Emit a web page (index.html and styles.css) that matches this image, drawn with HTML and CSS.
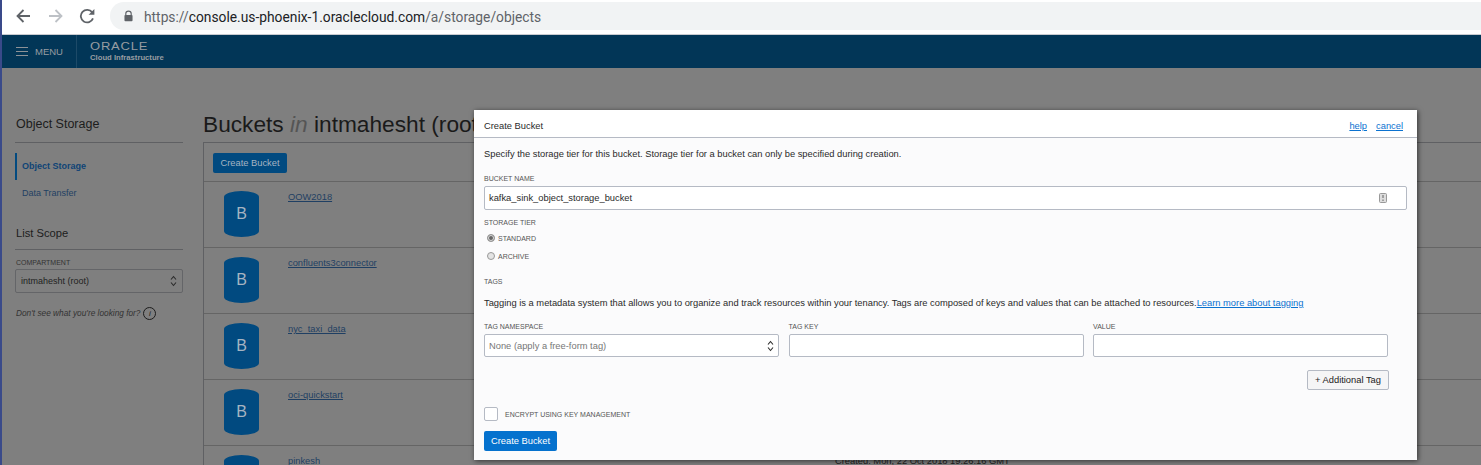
FILE: index.html
```html
<!DOCTYPE html>
<html lang="en">

<head>
    <meta charset="UTF-8">
    <meta name="viewport" content="width=device-width, initial-scale=1.0">
    <title>Object Storage</title>
    <link rel="stylesheet" href="styles.css">
</head>

<body>

    <!-- Browser toolbar -->
    <div class="toolbar">
        <svg class="tool-icon" viewBox="0 0 16 16"><path d="M15 8H3M8.500 2 2.500 8l6 6" fill="none" stroke="#5f6368" stroke-width="1.800"/></svg>
        <svg class="tool-icon" viewBox="0 0 16 16"><path d="M2 8h12M8.500 2l6 6-6 6" fill="none" stroke="#bdc1c6" stroke-width="1.800"/></svg>
        <svg class="tool-icon" viewBox="0 0 16 16"><path d="M14 10.400A6.300 6.300 0 1 1 13.200 4.400" fill="none" stroke="#5f6368" stroke-width="1.800"/><path d="M15.400 1v5.800H9.600z" fill="#5f6368"/></svg>
        <div class="address">
            <svg class="lock" viewBox="0 0 10 12"><path d="M2 5V3.500a3 3 0 0 1 6 0V5" fill="none" stroke="#5f6368" stroke-width="1.300"/><rect x="0.500" y="4.800" width="9" height="7" rx="1" fill="#5f6368"/></svg>
            <span class="url-dim">https://</span><span class="url-host">console.us-phoenix-1.oraclecloud.com</span><span class="url-dim">/a/storage/objects</span>
        </div>
    </div>

    <div class="window">
        <header class="topnav">
            <div class="menu">
                <svg class="burger" viewBox="0 0 12 9"><path d="M0 .5h12M0 4.500h12M0 8.500h12" stroke="#8d9297" stroke-width="1"/></svg>
                <span>MENU</span>
            </div>
            <div class="brand">
                <span class="brand-name">ORACLE</span>
                <span class="brand-sub">Cloud Infrastructure</span>
            </div>
        </header>

        <div class="page">
            <aside class="sidebar">
                <h3 class="side-title">Object Storage</h3>
                <ul class="side-links">
                    <li class="active">Object Storage</li>
                    <li>Data Transfer</li>
                </ul>
                <h3 class="side-title scope-title">List Scope</h3>
                <label class="side-label">COMPARTMENT</label>
                <div class="side-select">
                    <span>intmahesht (root)</span>
                    <svg class="updown" viewBox="0 0 7 12"><path d="M1 4.500 3.500 1.500 6 4.500M1 7.500l2.500 3 2.500-3" fill="none" stroke="#2b2b2b" stroke-width="1.100"/></svg>
                </div>
                <p class="side-help">Don't see what you're looking for? <span class="info">i</span></p>
            </aside>

            <main class="content">
                <h1 class="title">Buckets <em>in</em> intmahesht (root)</h1>
                <div class="panel">
                    <div class="panel-top"><button class="dim-btn">Create Bucket</button></div>
                    <div class="bucket">
                        <div class="can">B</div>
                        <a href="#">OOW2018</a>
                    </div>
                    <div class="bucket">
                        <div class="can">B</div>
                        <a href="#">confluents3connector</a>
                    </div>
                    <div class="bucket">
                        <div class="can">B</div>
                        <a href="#">nyc_taxi_data</a>
                    </div>
                    <div class="bucket">
                        <div class="can">B</div>
                        <a href="#">oci-quickstart</a>
                    </div>
                    <div class="bucket">
                        <div class="can">B</div>
                        <a href="#" class="plain">pinkesh</a>
                        <span class="created">Created: Mon, 22 Oct 2018 19:26:16 GMT</span>
                    </div>
                </div>
            </main>
        </div>

        <!-- Create Bucket dialog -->
        <div class="modal">
            <div class="modal-head">
                <span>Create Bucket</span>
                <div class="modal-links"><a href="#">help</a><a href="#">cancel</a></div>
            </div>
            <div class="modal-body">
                <p class="intro">Specify the storage tier for this bucket. Storage tier for a bucket can only be specified during creation.</p>
                <label class="field-label name-label">BUCKET NAME</label>
                <div class="input name-input">
                    <span>kafka_sink_object_storage_bucket</span>
                    <svg class="key-icon" viewBox="0 0 8 10"><rect x=".5" y=".5" width="7" height="9" rx="1" fill="#ddd" stroke="#999"/><path d="M4 2v3M4 6.500v1.500" stroke="#777" stroke-width="1.200"/></svg>
                </div>
                <label class="field-label tier-label">STORAGE TIER</label>
                <div class="radio-row"><span class="radio checked"></span><span class="radio-text">STANDARD</span></div>
                <div class="radio-row"><span class="radio"></span><span class="radio-text">ARCHIVE</span></div>
                <label class="field-label tags-label">TAGS</label>
                <p class="tag-text">Tagging is a metadata system that allows you to organize and track resources within your tenancy. Tags are composed of keys and values that can be attached to resources.<a href="#">Learn more about tagging</a></p>
                <div class="tag-grid">
                    <div>
                        <label class="field-label">TAG NAMESPACE</label>
                        <div class="input tag-input">
                            <span class="placeholder">None (apply a free-form tag)</span>
                            <svg class="updown" viewBox="0 0 7 12"><path d="M1 4.500 3.500 1.500 6 4.500M1 7.500l2.500 3 2.500-3" fill="none" stroke="#2b2b2b" stroke-width="1.100"/></svg>
                        </div>
                    </div>
                    <div>
                        <label class="field-label">TAG KEY</label>
                        <div class="input tag-input"></div>
                    </div>
                    <div>
                        <label class="field-label">VALUE</label>
                        <div class="input tag-input"></div>
                    </div>
                </div>
                <div class="add-row"><button class="add-btn">+ Additional Tag</button></div>
                <div class="check-row"><span class="check"></span><span class="check-text">ENCRYPT USING KEY MANAGEMENT</span></div>
                <button class="primary-btn">Create Bucket</button>
            </div>
        </div>
    </div>

</body>

</html>
```

FILE: styles.css
```css
* {
    box-sizing: border-box;
}

html,
body {
    height: 100%;
}

body {
    font-family: "Liberation Sans", Arial, sans-serif;
    margin: 0;
    padding: 0;
    overflow: hidden;
    background-color: #7f7f7f;
    border-left: 2px solid #3a4a8a;
}

.toolbar {
    height: 34px;
    background-color: #fff;
    display: flex;
    align-items: center;
    padding: 0 0 2px 13px;
}

.tool-icon {
    width: 16px;
    height: 16px;
    margin-right: 16px;
    flex: none;
}

.address {
    width: 1371px;
    height: 28px;
    margin-left: -1px;
    padding: 2px 0 0 14px;
    background-color: #f1f3f4;
    border-radius: 14px 0 0 14px;
    display: flex;
    align-items: center;
    font-family: "Roboto", "Liberation Sans", sans-serif;
    font-size: 13.8px;
}

.lock {
    width: 9px;
    height: 12px;
    margin: -3px 11px 0 0;
}

.url-dim {
    color: #5f6368;
}

.url-host {
    color: #202124;
}

.window {
    position: relative;
    height: 431px;
    border-top: 1px solid #c9cbd0;
    overflow: hidden;
}

.topnav {
    height: 33px;
    background-color: #023657;
    display: flex;
    align-items: center;
    color: #989da2;
}

.menu {
    width: 75px;
    height: 100%;
    padding-left: 14px;
    border-right: 1px solid #1d4a68;
    display: flex;
    align-items: center;
    gap: 7px;
    font-size: 9.500px;
}

.burger {
    width: 12px;
    height: 9px;
}

.brand {
    padding-left: 13px;
    display: flex;
    flex-direction: column;
}

.brand-name {
    font-size: 10px;
    line-height: 11px;
    letter-spacing: 0.6px;
    transform: scaleX(1.3);
    transform-origin: left;
}

.brand-sub {
    font-size: 7.700px;
    line-height: 10px;
    font-weight: bold;
    margin-top: 1px;
}

.page {
    display: flex;
    padding: 42px 0 0 13px;
}

.sidebar {
    width: 168px;
    flex: none;
    color: #1c1c1c;
}

.side-title {
    margin: 7px 0 0;
    padding: 0 0 10px 1px;
    font-size: 12.5px;
    line-height: 15px;
    font-weight: normal;
    border-bottom: 1px solid #5f6063;
}

.side-links {
    list-style-type: none;
    margin: 10px 0 0;
    padding: 0;
}

.side-links li {
    height: 27px;
    padding-left: 7px;
    font-size: 9px;
    line-height: 27px;
    color: #1f3f63;
}

.side-links .active {
    font-weight: bold;
    color: #0f4476;
    border-left: 2px solid #024a80;
    padding-left: 5px;
}

.scope-title {
    margin-top: 19px;
    padding-bottom: 8px;
    font-size: 11.200px;
}

.side-label {
    display: block;
    margin-top: 8px;
    padding-left: 1px;
    font-size: 7px;
    line-height: 9px;
    color: #333;
}

.side-select {
    height: 24px;
    margin-top: 2px;
    padding: 0 5px;
    border: 1px solid #646568;
    border-radius: 2px;
    display: flex;
    align-items: center;
    justify-content: space-between;
    font-size: 9px;
    color: #222;
}

.updown {
    width: 7px;
    height: 12px;
}

.side-help {
    margin: 13px 0 0;
    padding-left: 1px;
    font-size: 8.300px;
    line-height: 14px;
    font-style: italic;
    color: #333;
    display: flex;
    align-items: center;
    gap: 3px;
}

.info {
    width: 13px;
    height: 13px;
    border: 1px solid #1c1c1c;
    border-radius: 50%;
    display: inline-block;
    text-align: center;
    line-height: 11px;
    font-size: 8px;
    color: #1c1c1c;
}

.content {
    flex: 1;
    margin-left: 20px;
}

.title {
    margin: 0;
    font-size: 22.7px;
    line-height: 28px;
    font-weight: normal;
    color: #1a1a1a;
    white-space: nowrap;
}

.title em {
    color: #555;
}

.panel {
    margin-top: 4px;
    border-top: 1px solid #5f6063;
    border-left: 1px solid #5f6063;
}

.panel-top {
    height: 39px;
    padding: 9px 0 0 9px;
    border-bottom: 1px solid #656565;
}

.dim-btn {
    height: 20px;
    width: 74px;
    padding: 0;
    border: 0;
    border-radius: 2px;
    background-color: #014a80;
    color: #a6b4c2;
    font-family: inherit;
    font-size: 9.330px;
}

.bucket {
    position: relative;
    height: 66px;
    padding: 9px 0 0 20px;
    border-bottom: 1px solid #656565;
    display: flex;
    align-items: flex-start;
    gap: 29px;
}

.bucket a {
    font-size: 9.330px;
    line-height: 11px;
    margin-top: 1px;
    color: #1f3f63;
}

.bucket a.plain {
    text-decoration: none;
}

.can {
    width: 35px;
    height: 46px;
    border-radius: 50% / 13%;
    background-color: #014a80;
    color: #a6b4c2;
    font-size: 16px;
    line-height: 46px;
    text-align: center;
}

.created {
    position: absolute;
    left: 631px;
    top: 10px;
    font-size: 9.330px;
    color: #222;
    white-space: nowrap;
}

/* dialog sits over the dimmed page */
.modal {
    position: absolute;
    left: 472px;
    top: 75px;
    width: 943px;
    height: 350px;
    background-color: #fbfbfc;
    box-shadow: 1px 1px 5px rgba(0, 0, 0, 0.6);
    color: #2a2a2a;
}

.modal-head {
    height: 28px;
    padding: 5px 14px 0 10px;
    background-color: #fff;
    border-bottom: 1px solid #b5bac4;
    display: flex;
    align-items: center;
    justify-content: space-between;
    font-size: 9.330px;
}

.modal-links {
    display: flex;
    gap: 9px;
}

a {
    color: #0b72d0;
}

.modal-body {
    padding: 0 10px;
}

.intro {
    margin: 0;
    padding-top: 10px;
    font-size: 9.330px;
    line-height: 12px;
}

.field-label {
    display: block;
    font-size: 7px;
    line-height: 9px;
    color: #555;
}

.name-label {
    margin-top: 14px;
}

.input {
    background-color: #fff;
    border: 1px solid #b5bac4;
    border-radius: 2px;
    display: flex;
    align-items: center;
    justify-content: space-between;
    font-size: 9.330px;
    padding: 0 4px;
}

.name-input {
    height: 24px;
    margin-top: 3px;
    width: 923px;
    padding-right: 19px;
}

.key-icon {
    width: 8px;
    height: 10px;
}

.tier-label {
    margin: 8px 0 2px;
}

.radio-row {
    height: 18px;
    padding: 1px 0 0 3px;
    display: flex;
    align-items: center;
    gap: 3px;
}

.radio {
    width: 8px;
    height: 8px;
    margin-top: -2px;
    border: 1px solid #999;
    border-radius: 50%;
    background-color: #e4e4e4;
}

.radio.checked {
    background-color: #666;
    box-shadow: inset 0 0 0 1px #ddd;
}

.radio-text {
    font-size: 7px;
    color: #555;
}

.tags-label {
    margin-top: 12px;
}

.tag-text {
    margin: 11px 0 0;
    font-size: 9.330px;
    line-height: 12px;
    white-space: nowrap;
}

.tag-grid {
    margin-top: 13px;
    display: grid;
    grid-template-columns: 295px 295px 295px;
    column-gap: 9.500px;
}

.tag-input {
    height: 23px;
    margin-top: 3px;
}

.placeholder {
    color: #777;
}

.add-row {
    width: 905px;
    margin-top: 13px;
    display: flex;
    justify-content: flex-end;
}

.add-btn {
    width: 82px;
    height: 20px;
    padding: 0;
    border: 1px solid #b5bac4;
    border-radius: 2px;
    background-color: #f5f5f6;
    color: #222;
    font-family: inherit;
    font-size: 9.330px;
}

.check-row {
    margin-top: 17px;
    display: flex;
    align-items: center;
    gap: 7px;
}

.check {
    width: 14px;
    height: 14px;
    background-color: #fff;
    border: 1px solid #b5bac4;
    border-radius: 2px;
}

.check-text {
    font-size: 7px;
    color: #555;
}

.primary-btn {
    display: block;
    margin-top: 10px;
    width: 73px;
    height: 20px;
    padding: 0;
    border: 0;
    border-radius: 2px;
    background-color: #0572ce;
    color: #fff;
    font-family: inherit;
    font-size: 9.330px;
}
```
